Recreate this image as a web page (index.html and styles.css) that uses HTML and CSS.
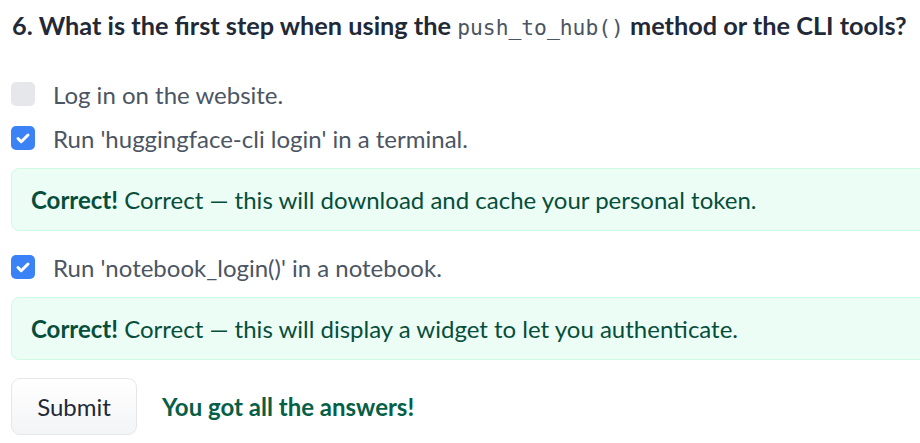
FILE: index.html
```html
<!DOCTYPE html>
<html lang="en">
<head>
    <meta charset="UTF-8">
    <meta name="viewport" content="width=device-width, initial-scale=1.0">
    <title>Quiz</title>
    <link rel="stylesheet" href="styles.css">
</head>
<body>
    <div class="quiz">
        <h3 class="question">6. What is the first step when using the <code>push_to_hub()</code> method or the CLI tools?</h3>

        <div class="choice">
            <label class="option">
                <span class="box"></span>
                <span>Log in on the website.</span>
            </label>
        </div>

        <div class="choice">
            <label class="option">
                <span class="box checked">
                    <svg viewBox="0 0 24 24" width="24" height="24"><path d="M7 12.5l3.2 3.2L17 9" fill="none" stroke="#fff" stroke-width="3" stroke-linecap="round" stroke-linejoin="round"/></svg>
                </span>
                <span>Run 'huggingface-cli login' in a terminal.</span>
            </label>
            <div class="feedback"><strong>Correct!</strong> Correct — this will download and cache your personal token.</div>
        </div>

        <div class="choice">
            <label class="option">
                <span class="box checked">
                    <svg viewBox="0 0 24 24" width="24" height="24"><path d="M7 12.5l3.2 3.2L17 9" fill="none" stroke="#fff" stroke-width="3" stroke-linecap="round" stroke-linejoin="round"/></svg>
                </span>
                <span>Run 'notebook_login()' in a notebook.</span>
            </label>
            <div class="feedback"><strong>Correct!</strong> Correct — this will display a widget to let you authenticate.</div>
        </div>

        <div class="actions">
            <button type="button" class="submit">Submit</button>
            <span class="result">You got all the answers!</span>
        </div>
    </div>
</body>
</html>
```

FILE: styles.css
```css
html, body {
    overflow: hidden;
}
body {
    margin: 0;
    padding: 7px 0 0 11px;
    font-family: Lato, "Noto Sans", sans-serif;
    font-size: 24px;
    color: #4b5563;
    background: #fff;
}
.quiz {
    width: 960px;
    display: flex;
    flex-direction: column;
    gap: 8px;
}
.question {
    margin: 0 0 25px 1px;
    font-size: 25.3px;
    line-height: 36px;
    font-weight: 700;
    color: #1f2937;
}
.question code {
    font-family: "DejaVu Sans Mono", monospace;
    font-size: 21.3px;
    line-height: 1;
    font-weight: 400;
    color: #4b5563;
}
.choice {
    display: flex;
    flex-direction: column;
}
.option {
    display: flex;
    align-items: center;
    height: 36px;
    gap: 18px;
}
.box {
    width: 24px;
    height: 24px;
    border-radius: 5px;
    background: #e5e7eb;
    display: flex;
    flex-shrink: 0;
}
.box.checked {
    background: #3b82f6;
}
.feedback {
    margin: 12px 0 10px;
    padding: 13px 19px 12px;
    line-height: 36px;
    border: 1px solid #d1fae5;
    border-radius: 8px;
    background: #ecfdf5;
    color: #064e3b;
}
.actions {
    display: flex;
    align-items: center;
    gap: 25px;
}
.submit {
    width: 126px;
    height: 57px;
    font-family: inherit;
    font-size: 24px;
    color: #1f2937;
    border: 1px solid #e5e7eb;
    border-radius: 9px;
    background: linear-gradient(to bottom, #fff, #f3f4f6);
}
.result {
    font-weight: 700;
    color: #065f46;
}
```
